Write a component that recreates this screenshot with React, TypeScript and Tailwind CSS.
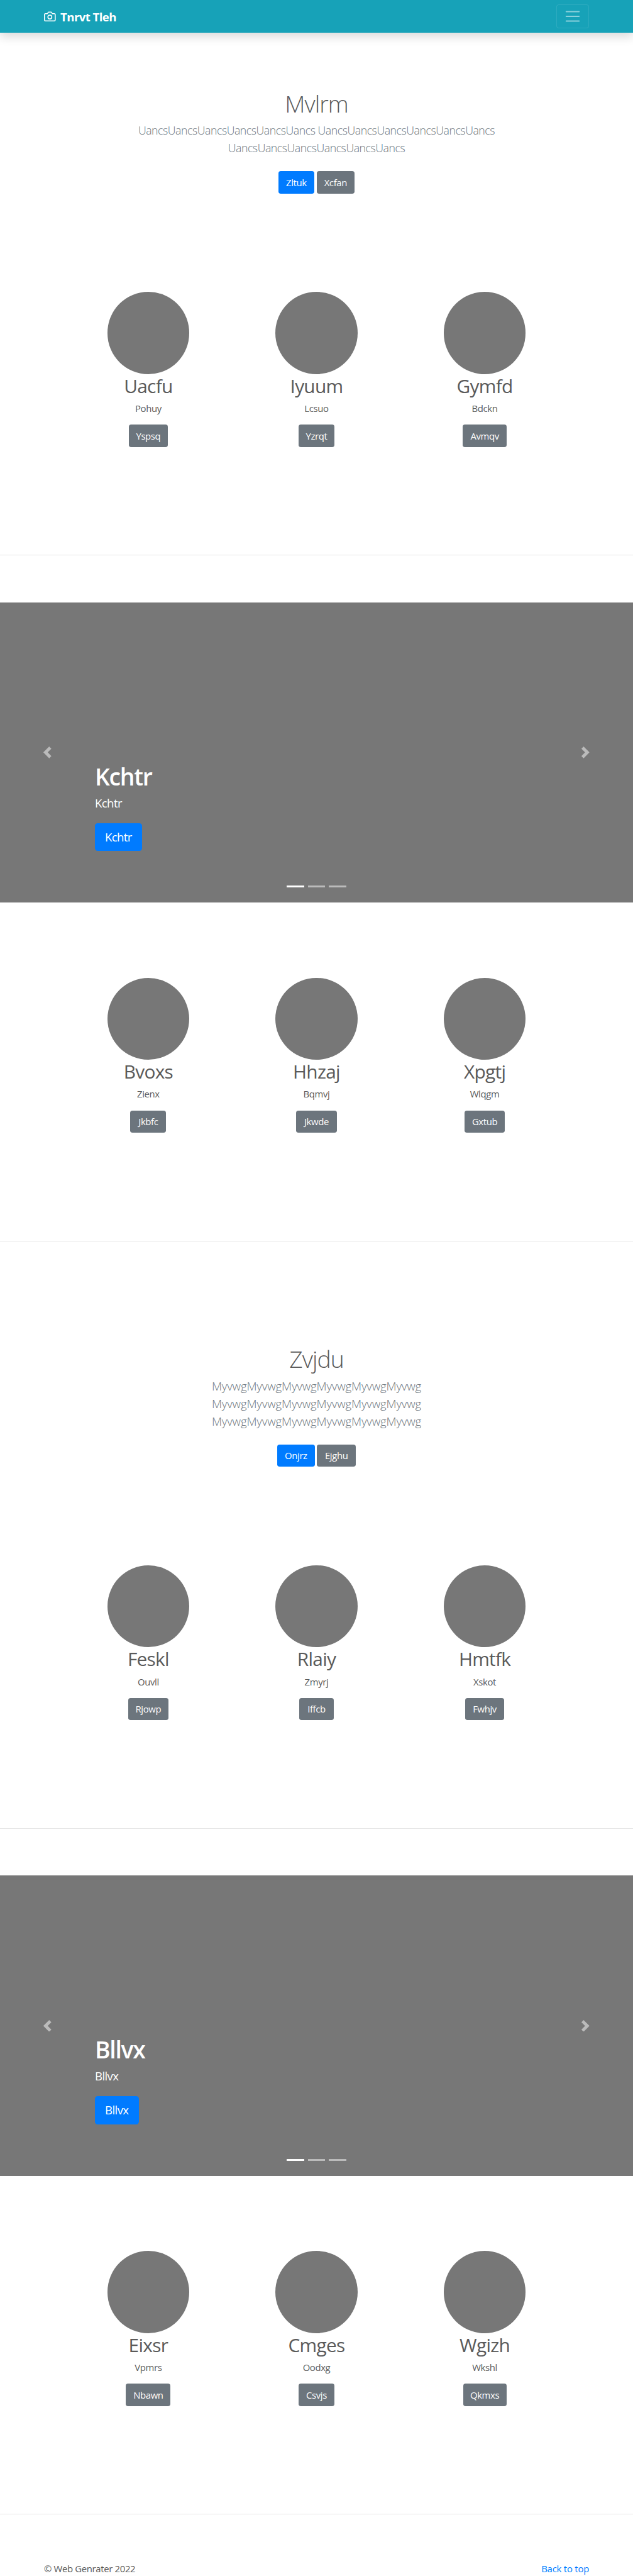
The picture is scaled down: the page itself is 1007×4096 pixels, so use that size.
import type { ReactNode } from "react";

type Item = { title: string; text: string; button: string; width: string };

const groups: Item[][] = [
  [
    { title: "Uacfu", text: "Pohuy", button: "Yspsq", width: "w-[66px]" },
    { title: "Iyuum", text: "Lcsuo", button: "Yzrqt", width: "w-[62px]" },
    { title: "Gymfd", text: "Bdckn", button: "Avmqv", width: "w-[75px]" },
  ],
  [
    { title: "Bvoxs", text: "Zienx", button: "Jkbfc", width: "w-[61px]" },
    { title: "Hhzaj", text: "Bqmvj", button: "Jkwde", width: "w-[70px]" },
    { title: "Xpgtj", text: "Wlqgm", button: "Gxtub", width: "w-[68px]" },
  ],
  [
    { title: "Feskl", text: "Ouvll", button: "Rjowp", width: "w-[69px]" },
    { title: "Rlaiy", text: "Zmyrj", button: "Iffcb", width: "w-[58px]" },
    { title: "Hmtfk", text: "Xskot", button: "Fwhjv", width: "w-[66px]" },
  ],
  [
    { title: "Eixsr", text: "Vpmrs", button: "Nbawn", width: "w-[76px]" },
    { title: "Cmges", text: "Oodxg", button: "Csvjs", width: "w-[62px]" },
    { title: "Wgizh", text: "Wkshl", button: "Qkmxs", width: "w-[74px]" },
  ],
];

function Button({ label, width, primary = false }: { label: string; width: string; primary?: boolean }) {
  return (
    <a
      className={`flex h-[38px] items-center justify-center rounded whitespace-nowrap text-base tracking-[-0.025em] text-white ${width} ${
        primary ? "bg-[#007bff]" : "bg-[#6c757d]"
      }`}
    >
      {label}
    </a>
  );
}

function Navbar() {
  return (
    <header className="relative flex h-14 items-center justify-between bg-[#17a2b8] px-[75px] shadow-[0_8px_16px_rgba(0,0,0,0.15)]">
      <a className="flex items-center gap-2 text-white">
        <svg className="h-5 w-5" viewBox="0 0 24 24" fill="none" stroke="currentColor" strokeWidth="2" strokeLinecap="round" strokeLinejoin="round">
          <path d="M23 19a2 2 0 0 1-2 2H3a2 2 0 0 1-2-2V8a2 2 0 0 1 2-2h4l2-3h6l2 3h4a2 2 0 0 1 2 2z" />
          <circle cx="12" cy="13" r="4" />
        </svg>
        <strong className="pt-px text-xl leading-[30px] font-bold tracking-[-0.031em]">Tnrvt Tleh</strong>
      </a>
      <button className="flex h-10 w-14 items-center justify-center rounded border border-white/10">
        <svg className="h-[30px] w-[30px]" viewBox="0 0 30 30" stroke="#fff" strokeOpacity="0.5" strokeWidth="2" strokeLinecap="round">
          <path d="M4 7h22M4 15h22M4 23h22" />
        </svg>
      </button>
    </header>
  );
}

function Hero({ title, lines, leadStyle, children }: { title: string; lines: string[]; leadStyle: string; children: ReactNode }) {
  return (
    <section className="flex flex-col items-center text-center">
      <h1 className="mb-[7px] pt-px text-[40px] leading-[48px] font-light tracking-[-0.026em]">{title}</h1>
      <div className={`mb-6 font-light text-[#6c757d] ${leadStyle}`}>
        {lines.map((line, i) => (
          <p key={i} className="whitespace-nowrap">{line}</p>
        ))}
      </div>
      <div className="flex gap-1">{children}</div>
    </section>
  );
}

function Trio({ items }: { items: Item[] }) {
  return (
    <section className="mx-auto grid h-[448.4px] w-[861px] grid-cols-3">
      {items.map((item) => (
        <div key={item.title} className="flex flex-col items-center">
          <div className="h-[140px] w-[140px] rounded-full bg-[#777]" />
          <h2 className="mb-[7px] pt-px text-[32px] leading-[38.4px] tracking-[-0.024em]">{item.title}</h2>
          <p className="mb-4 text-base leading-6 tracking-[-0.025em]">{item.text}</p>
          <Button label={item.button} width={item.width} />
        </div>
      ))}
    </section>
  );
}

function Carousel({ label, width }: { label: string; width: string }) {
  return (
    <section className="relative mt-20 mb-32 flex h-[512px] flex-col items-start justify-end bg-[#777] px-[162px] pb-[88px] text-white">
      <h1 className="mb-[6px] pt-px text-[40px] leading-[48px] font-semibold tracking-[-0.034em]">{label}</h1>
      <p className="mb-[19px] text-xl leading-[30px] tracking-[-0.034em]">{label}</p>
      <a className={`flex h-12 items-center justify-center rounded-[4.8px] bg-[#007bff] text-xl tracking-[-0.034em] ${width}`}>{label}</a>
      <svg className="absolute top-[246px] left-[71px] h-5 w-5 opacity-50" viewBox="0 0 8 8" fill="#fff">
        <path d="M5.25 0l-4 4 4 4 1.5-1.5L4.25 4l2.5-2.5L5.25 0z" />
      </svg>
      <svg className="absolute top-[246px] right-[71px] h-5 w-5 opacity-50" viewBox="0 0 8 8" fill="#fff">
        <path d="M2.75 0l-1.5 1.5L3.75 4l-2.5 2.5L2.75 8l4-4-4-4z" />
      </svg>
      <div className="absolute inset-x-0 bottom-[26px] flex justify-center gap-1.5">
        <span className="h-[3px] w-[30px] bg-white" />
        <span className="h-[3px] w-[30px] bg-white/50" />
        <span className="h-[3px] w-[30px] bg-white/50" />
      </div>
    </section>
  );
}

const Divider = () => <hr className="border-t border-black/10" />;

export default function App() {
  return (
    <div className="h-[4392px] w-[1080px] overflow-hidden bg-white font-['Open_Sans',sans-serif] text-base text-[#5a5a5a] [zoom:0.93241]">
      <Navbar />
      <main>
        <div className="mt-24 mb-42">
          <Hero
            title="Mvlrm"
            leadStyle="text-[19px] leading-[30px] tracking-[-0.026em]"
            lines={["UancsUancsUancsUancsUancsUancs UancsUancsUancsUancsUancsUancs", "UancsUancsUancsUancsUancsUancs"]}
          >
            <Button label="Zltuk" width="w-[61px]" primary />
            <Button label="Xcfan" width="w-[65px]" />
          </Hero>
        </div>
        <Trio items={groups[0]} />
        <Divider />
        <Carousel label="Kchtr" width="w-[80px]" />
        <Trio items={groups[1]} />
        <Divider />
        <div className="mt-[176.4px] mb-42">
          <Hero
            title="Zvjdu"
            leadStyle="text-xl leading-[30px] tracking-[-0.0085em]"
            lines={["MyvwgMyvwgMyvwgMyvwgMyvwgMyvwg", "MyvwgMyvwgMyvwgMyvwgMyvwgMyvwg", "MyvwgMyvwgMyvwgMyvwgMyvwgMyvwg"]}
          >
            <Button label="Onjrz" width="w-[64px]" primary />
            <Button label="Ejghu" width="w-[66px]" />
          </Hero>
        </div>
        <Trio items={groups[2]} />
        <Divider />
        <Carousel label="Bllvx" width="w-[74.5px]" />
        <Trio items={groups[3]} />
        <Divider />
      </main>
      <footer className="mt-20 flex justify-between px-[75px] leading-6">
        <p className="tracking-[-0.023em]">© Web Genrater 2022</p>
        <a className="tracking-[-0.015em] text-[#007bff]">Back to top</a>
      </footer>
    </div>
  );
}
